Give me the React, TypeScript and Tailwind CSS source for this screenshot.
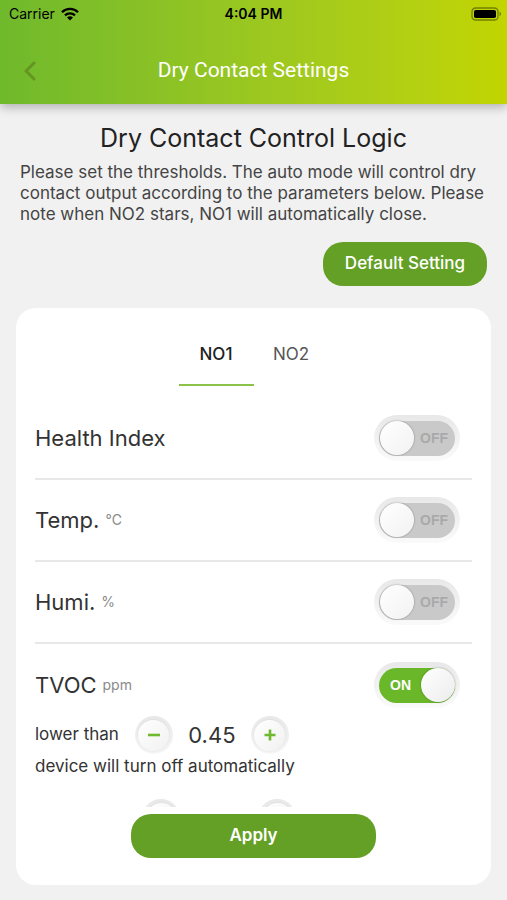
import { useState } from "react";

const fontBody = "font-['Inter','Noto_Sans_CJK_SC',sans-serif]";

function StatusBar() {
  return (
    <div className="grid h-7 grid-cols-3 items-center px-2 text-sm text-black">
      <div className="flex items-center gap-1.5 pl-px">
        <span>Carrier</span>
        <svg width="18" height="14" viewBox="0 0 18 14" aria-hidden="true">
          <g fill="none" stroke="currentColor" strokeWidth="2.3">
            <path d="M1 5.2a11.4 11.4 0 0 1 16 0" />
            <path d="M4 8.4a7.1 7.1 0 0 1 10 0" />
          </g>
          <path d="M9 13.6 6 10.6a4.3 4.3 0 0 1 6 0Z" fill="currentColor" />
        </svg>
      </div>
      <span className="text-center font-semibold">4:04 PM</span>
      <svg className="-mr-1 justify-self-end" width="32" height="14" viewBox="0 0 32 14" aria-hidden="true">
        <rect x="1" y="1" width="26" height="12" rx="3.6" fill="none" stroke="#000" strokeOpacity="0.4" strokeWidth="1.3" />
        <rect x="3" y="3" width="22" height="8" rx="1.8" fill="#000" />
        <path d="M28.600 4.800v4.400c1.900-.6 1.900-3.800 0-4.400Z" fill="#000" fillOpacity="0.4" />
      </svg>
    </div>
  );
}

function Switch({ id, initial }: { id: string; initial: boolean }) {
  const [on, setOn] = useState(initial);
  return (
    <label
      htmlFor={id}
      className="relative flex h-[46px] w-[86px] shrink-0 cursor-pointer items-center rounded-full bg-linear-to-b from-[#e8e8e8] to-[#fafafa] px-[5px] text-sm font-bold"
    >
      <input
        id={id}
        type="checkbox"
        role="switch"
        checked={on}
        onChange={(e) => setOn(e.target.checked)}
        className="h-[35px] w-full cursor-pointer appearance-none rounded-full bg-[#c9c9c9] checked:bg-[#6ab82a]"
      />
      <span
        className={
          on
            ? "pointer-events-none absolute left-4 font-['Liberation_Sans',sans-serif] text-white"
            : "pointer-events-none absolute right-3 font-['Liberation_Sans',sans-serif] text-[#a9a9a9]"
        }
      >
        {on ? "ON" : "OFF"}
      </span>
      <span
        className={
          on
            ? "pointer-events-none absolute right-[5px] size-[34px] rounded-full bg-linear-to-br from-white to-[#ececec] shadow-[0_0_2px_rgba(0,0,0,0.4)]"
            : "pointer-events-none absolute left-1.5 size-[34px] rounded-full bg-linear-to-br from-white to-[#f2f2f2] shadow-[0_0_2px_rgba(0,0,0,0.4)]"
        }
      />
    </label>
  );
}

function Row({ id, name, unit, on = false, line = true }: { id: string; name: string; unit?: string; on?: boolean; line?: boolean }) {
  return (
    <div className={line ? "flex h-[82px] items-center justify-between border-b-2 border-[#e8e8e8] pr-3" : "flex h-[82px] items-center justify-between pr-3"}>
      <span className="flex items-center gap-1.5 text-[22px] text-[#333]">
        <label htmlFor={id}>{name}</label>
        {unit && <span className="text-sm text-[#8a8a8a]">{unit}</span>}
      </span>
      <Switch id={id} initial={on} />
    </div>
  );
}

function StepButton({ kind, onClick }: { kind: "minus" | "plus"; onClick?: () => void }) {
  return (
    <button
      type="button"
      aria-label={kind === "minus" ? "Decrease" : "Increase"}
      onClick={onClick}
      className="flex size-[38px] items-center justify-center rounded-full bg-linear-to-b from-[#e8e8e8] to-[#f6f6f6]"
    >
      <span className="flex size-[31px] items-center justify-center rounded-full bg-linear-to-br from-white to-[#f1f1f1] shadow-[0_0_2px_rgba(0,0,0,0.12)]">
        <svg width="12" height="12" viewBox="0 0 12 12" stroke="#6fb92c" strokeWidth="2.6" aria-hidden="true">
          <path d={kind === "minus" ? "M0 6h12" : "M.5 6h11M6 .5v11"} />
        </svg>
      </span>
    </button>
  );
}

function Stepper({ label, initial }: { label: string; initial: number }) {
  const [value, setValue] = useState(initial);
  return (
    <div className="flex items-center text-[#333]">
      <span className="mr-4 text-[17px]">{label}</span>
      <StepButton kind="minus" onClick={() => setValue(value - 0.01)} />
      <output className="w-[78px] text-center text-[22px]">{value.toFixed(2)}</output>
      <StepButton kind="plus" onClick={() => setValue(value + 0.01)} />
    </div>
  );
}

export default function App() {
  const [tab, setTab] = useState("NO1");
  return (
    <div className={`flex h-screen flex-col bg-[#f1f1f1] ${fontBody}`}>
      <header className="relative shrink-0 bg-linear-to-r from-[#6fb92c] to-[#c2d500] shadow-[0_3px_10px_rgba(0,0,0,0.28)]">
        <StatusBar />
        <div className="grid h-[76px] grid-cols-[44px_1fr_44px] items-center px-2 pt-2.5">
          <button type="button" aria-label="Back" className="flex h-10 items-center justify-center">
            <svg width="12" height="20" viewBox="0 0 12 20" fill="none" stroke="#649522" strokeWidth="3" strokeLinecap="round" aria-hidden="true">
              <path d="m10 2-8 8 8 8" />
            </svg>
          </button>
          <h1 className="text-center font-['Roboto',sans-serif] text-[21px] text-white">Dry Contact Settings</h1>
        </div>
      </header>

      <main className="flex min-h-0 flex-1 flex-col px-4 pb-[15px] pt-5">
        <h2 className="text-center text-[25px] leading-[28px] text-[#222]">Dry Contact Control Logic</h2>
        <p className="mt-2.5 pl-1 text-[17px] leading-[21px] text-[#444]">
          Please set the thresholds. The auto mode will control dry contact output according to the parameters below. Please note when NO2 stars, NO1
          will automatically close.
        </p>
        <button type="button" className="mr-1 mt-[17px] h-11 w-[164px] self-end rounded-[20px] bg-[#649f26] text-[17px] font-medium text-white">
          Default Setting
        </button>

        <section className="mt-[22px] flex min-h-0 flex-1 flex-col rounded-[20px] bg-white px-[19px] pb-[27px] pt-[17px]">
          <div role="tablist" className="mb-3 flex justify-center">
            {["NO1", "NO2"].map((name) => (
              <button
                key={name}
                type="button"
                role="tab"
                aria-selected={tab === name}
                onClick={() => setTab(name)}
                className={
                  tab === name
                    ? "h-[61px] w-[75px] border-b-2 border-[#8bc34a] text-[17px] font-medium text-[#222]"
                    : "h-[61px] w-[75px] border-b-2 border-transparent text-[17px] text-[#555]"
                }
              >
                {name}
              </button>
            ))}
          </div>

          <div className="min-h-0 flex-1 overflow-hidden">
            <Row id="health" name="Health Index" />
            <Row id="temp" name="Temp." unit="℃" />
            <Row id="humi" name="Humi." unit="%" />
            <Row id="tvoc" name="TVOC" unit="ppm" on line={false} />
            <div className="-mt-2.5">
              <Stepper label="lower than" initial={0.45} />
              <p className="mt-0.5 text-[17px] leading-[21px] text-[#333]">device will turn off automatically</p>
            </div>
            <div className="ml-[107px] mt-[22px] flex gap-[78px]">
              <StepButton kind="minus" />
              <StepButton kind="plus" />
            </div>
          </div>

          <button type="button" className="mt-[7px] h-11 w-[245px] shrink-0 self-center rounded-[20px] bg-[#649f26] text-[17px] font-semibold text-white">
            Apply
          </button>
        </section>
      </main>
    </div>
  );
}
